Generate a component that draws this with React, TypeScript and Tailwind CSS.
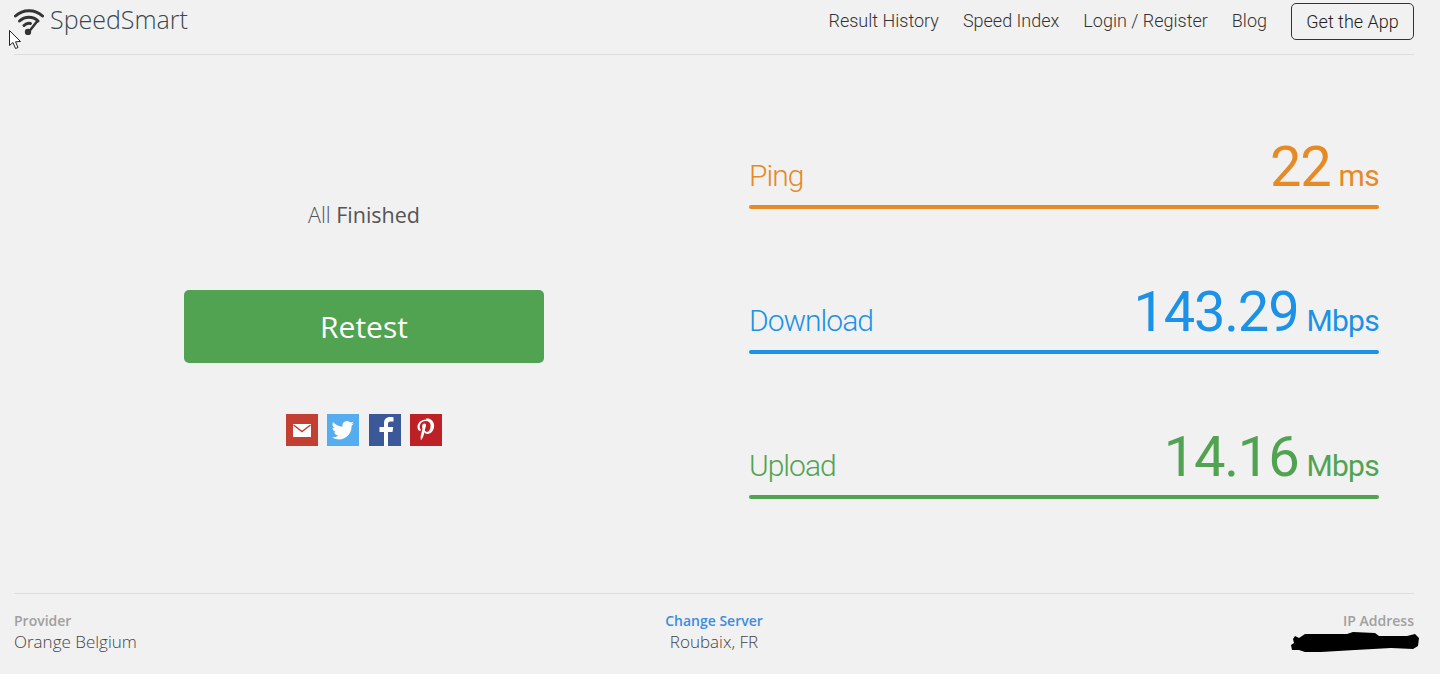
const roboto = { fontFamily: 'Roboto, sans-serif' }

function WifiLogo() {
  return (
    <svg width="30" height="28" viewBox="0 0 30 28" fill="none" stroke="#333" strokeLinecap="round" className="shrink-0">
      <path d="M1.500 9 C9 2 21 2 28.500 9" strokeWidth="3" />
      <path d="M5.500 14 C11 9 19 9 24 14" strokeWidth="3" />
      <path d="M10 18.500 C12 16.500 14.500 16 16.500 16.500" strokeWidth="3" />
      <path d="M23 14.500 L15.500 24" strokeWidth="2.500" />
      <circle cx="14" cy="25" r="3.200" fill="#333" stroke="none" />
    </svg>
  )
}

function Metric({ label, value, unit, text, bar, mt }: { label: string; value: string; unit: string; text: string; bar: string; mt: string }) {
  return (
    <div className={mt}>
      <div className={`flex items-baseline justify-between h-[65px] ${text}`} style={roboto}>
        <span className="text-[30px] font-light leading-[55px] tracking-[-1px]">{label}</span>
        <span className="leading-[55px]">
          <span className="text-[56px] font-normal tracking-[-1.2px]">{value}</span>
          <span className="text-[30px] font-normal ml-[8px] tracking-[-0.7px]">{unit}</span>
        </span>
      </div>
      <div className={`h-1 rounded-full ${bar}`} />
    </div>
  )
}

export default function App() {
  return (
    <div className="relative w-full h-[686px] bg-white overflow-hidden">
      <div className="h-[674px] bg-[#f1f1f1] pl-[14px] pr-[26px] flex flex-col">
        <header className="h-[55px] shrink-0 border-b border-[#dedede] flex items-start justify-between">
          <div className="flex items-start pt-[7px]">
            <WifiLogo />
            <span className="ml-[6px] -mt-[5px] text-[25px] font-light text-[#37474f] leading-[34px]" style={{ fontFamily: '"Open Sans", sans-serif' }}>SpeedSmart</span>
          </div>
          <nav className="flex items-center pt-[3px] text-[18px] font-light text-[#333] gap-6 [&>a:not(:last-child)]:-translate-y-px" style={roboto}>
            <a>Result History</a>
            <a>Speed Index</a>
            <a>Login / Register</a>
            <a>Blog</a>
            <a className="h-[37px] w-[123px] flex items-center justify-center border border-[#333] rounded-[5px] text-[#222]">Get the App</a>
          </nav>
        </header>

        <main className="flex-1 flex">
          <section className="w-[700px] flex flex-col items-center">
            <p className="mt-[146px] text-[21.500px] leading-7 text-[#555] font-light" style={{ fontFamily: '"Open Sans", sans-serif' }}>
              All <span className="font-medium">Finished</span>
            </p>
            <button className="mt-[61px] w-[360px] h-[73px] rounded-[5px] bg-[#51a351] text-white text-[30px]" style={{ fontFamily: '"Open Sans", sans-serif' }}>Retest</button>
            <div className="mt-[51px] flex gap-[9.600px]">
              <div className="w-8 h-8 bg-[#c23f32] flex items-center justify-center">
                <svg width="18" height="13" viewBox="0 0 18 13"><rect width="18" height="13" fill="#fff" /><path d="M0.500 1 L9 7.500 L17.500 1" fill="none" stroke="#c23f32" strokeWidth="1.500" /></svg>
              </div>
              <div className="w-8 h-8 bg-[#55acee] flex items-center justify-center">
                <svg width="24" height="24" viewBox="0 0 24 24" fill="#fff"><path d="M23 5.300c-.8.4-1.700.6-2.600.7.9-.6 1.600-1.400 2-2.500-.9.500-1.900.9-2.900 1.100a4.600 4.600 0 0 0-7.900 4.200C7.800 8.600 4.400 6.800 2.200 4a4.600 4.600 0 0 0 1.400 6.100c-.7 0-1.400-.2-2.100-.6 0 2.300 1.600 4.200 3.700 4.600-.7.2-1.400.2-2.100.1.600 1.800 2.300 3.100 4.300 3.200A9.300 9.300 0 0 1 .5 19.300 13 13 0 0 0 7.600 21.400c8.500 0 13.300-7.200 13-13.700.9-.6 1.700-1.400 2.400-2.400z" /></svg>
              </div>
              <div className="w-8 h-8 bg-[#3b5998] overflow-hidden">
                <svg width="32" height="32" viewBox="0 0 32 32" fill="#fff"><path d="M19 32V18h4.500l.7-5H19V10c0-1.500.5-2.500 2.500-2.500h3V3.200C24 3.100 22.500 3 21 3c-3.600 0-6 2.200-6 6.200V13h-4.500v5H15v14z" /></svg>
              </div>
              <div className="w-8 h-8 bg-[#bd2126] flex items-center justify-center">
                <svg width="24" height="28" viewBox="0 0 24 24" fill="#fff"><path d="M12.300 1.500C6.500 1.500 3.500 5.400 3.500 8.700c0 2 .8 3.800 2.400 4.400.3.100.5 0 .6-.3l.2-1c.1-.3 0-.4-.2-.7-.5-.6-.8-1.300-.8-2.400 0-3 2.300-5.800 5.900-5.800 3.200 0 5 2 5 4.600 0 3.500-1.500 6.400-3.800 6.400-1.300 0-2.200-1-1.900-2.300.4-1.500 1.100-3.200 1.100-4.300 0-1-.5-1.800-1.600-1.800-1.300 0-2.300 1.300-2.300 3.100 0 1.100.4 1.900.4 1.900l-1.600 6.700c-.5 2-.1 4.400 0 4.700 0 .1.200.2.300.1.100-.2 1.800-2.200 2.300-4.200l.9-3.500c.4.900 1.700 1.600 3 1.600 4 0 6.700-3.600 6.700-8.500 0-3.700-3.100-7.100-7.800-7.100z" /></svg>
              </div>
            </div>
          </section>
          <section className="w-[700px] px-[35px] pt-[85px]">
            <Metric label="Ping" value="22" unit="ms" text="text-[#e68a26]" bar="bg-[#e68a26]" mt="" />
            <Metric label="Download" value="143.29" unit="Mbps" text="text-[#1b92e8]" bar="bg-[#1b92e8]" mt="mt-[76px]" />
            <Metric label="Upload" value="14.16" unit="Mbps" text="text-[#51a351]" bar="bg-[#51a351]" mt="mt-[76px]" />
          </section>
        </main>

        <footer className="h-[81px] shrink-0 border-t border-[#dedede] pt-[17px] grid grid-cols-3 text-[14px] leading-[20px]" style={{ fontFamily: '"Open Sans", sans-serif' }}>
          <div>
            <div className="font-semibold text-[#a0a0a0]">Provider</div>
            <div className="text-[17px] font-light text-[#444] leading-[22px]">Orange Belgium</div>
          </div>
          <div className="text-center">
            <div className="font-semibold text-[#3b8de0]">Change Server</div>
            <div className="text-[17px] font-light text-[#444] leading-[22px]">Roubaix, FR</div>
          </div>
          <div className="relative text-right">
            <div className="font-semibold text-[#a0a0a0]">IP Address</div>
            <svg className="absolute right-[-5px] top-[21px]" width="128" height="22" viewBox="0 0 128 22">
              <path d="M2 7 L4 4 L8 6 L14 2 L56 2 L62 0 L84 1 L88 4 L116 4 L124 2 L128 6 L127 14 L122 17 L100 16 L64 18 L30 20 L14 20 L8 18 L1 18 L0 13 L3 11 Z" fill="#000" />
            </svg>
          </div>
        </footer>
      </div>

      <svg className="absolute left-[9px] top-[30px]" width="14" height="20" viewBox="0 0 14 20">
        <path d="M0.500 0.500 L0.500 15.500 L4 12.500 L6.500 18.500 L9 17.500 L6.500 11.800 L11.500 11.500 Z" fill="#fff" stroke="#222" strokeWidth="1" />
      </svg>
    </div>
  )
}
